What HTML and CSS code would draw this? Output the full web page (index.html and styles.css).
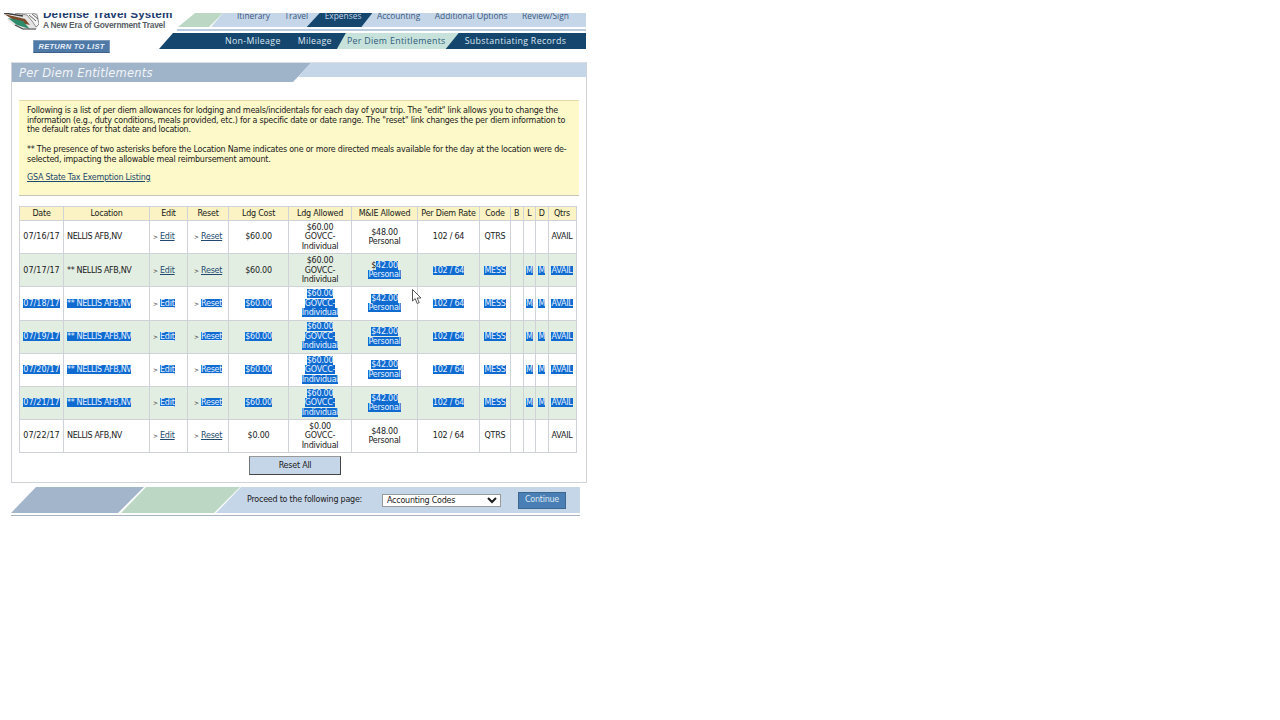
FILE: index.html
```html
<!DOCTYPE html>
<html lang="en">
<head>
<meta charset="utf-8">
<title>Per Diem Entitlements</title>
<link rel="stylesheet" href="styles.css">
</head>
<body>
<div class="page">
  <header class="header">
    <div class="brand">
      <div class="logo-row">
        <svg class="logo" width="36" height="18" viewBox="0 0 36 18">
          <path d="M4 6 L20 0 L35 0 L36 12 L33 17 L20 17 L10 12 Z" fill="#e4e4e4"/>
          <path d="M1 1 L14 4 L22 6 L27 12 L14 9 Z" fill="#7a4a2a"/>
          <path d="M5 5 L20 8 L25 14 L27 16 L14 12 Z" fill="#2d8a6a"/>
          <path d="M1 0 L20 3" stroke="#3a3a3a" stroke-width="1.4" fill="none"/>
          <path d="M12 0 L24 2 L29 8 L33 14 L36 11 L34 2 L30 0 Z" fill="#f4f4f4" stroke="#777" stroke-width="0.8"/>
          <path d="M12 12 L20 16 L33 16" fill="none" stroke="#444" stroke-width="1.1"/>
          <path d="M26 2 L33 8 M29 1 L35 6" stroke="#666" stroke-width="1" fill="none"/>
        </svg>
        <div class="brand-text">
          <div class="brand-name">Defense Travel System</div>
          <div class="brand-sub">A New Era of Government Travel</div>
        </div>
      </div>
      <a class="return-btn">RETURN TO LIST</a>
    </div>
    <nav class="nav">
      <div class="nav-top">
        <div class="nav-green"></div>
        <ul class="tabs-top">
          <li>Itinerary</li>
          <li>Travel</li>
          <li class="on">Expenses</li>
          <li>Accounting</li>
          <li>Additional Options</li>
          <li>Review/Sign</li>
        </ul>
      </div>
      <div class="nav-line"></div>
      <ul class="tabs-sub">
        <li>Non-Mileage</li>
        <li>Mileage</li>
        <li class="on">Per Diem Entitlements</li>
        <li>Substantiating Records</li>
      </ul>
    </nav>
  </header>

  <main class="panel">
    <div class="panel-head">
      <h1 class="panel-title">Per Diem Entitlements</h1>
      <div class="panel-band"></div>
    </div>
    <div class="notice">
      <p>Following is a list of per diem allowances for lodging and meals/incidentals for each day of your trip. The "edit" link allows you to change the information (e.g., duty conditions, meals provided, etc.) for a specific date or date range. The "reset" link changes the per diem information to the default rates for that date and location.</p>
      <p>** The presence of two asterisks before the Location Name indicates one or more directed meals available for the day at the location were de-selected, impacting the allowable meal reimbursement amount.</p>
      <p class="gsa"><a>GSA State Tax Exemption Listing</a></p>
    </div>
    <table class="grid">
      <colgroup>
        <col class="c-date"><col class="c-loc"><col class="c-edit"><col class="c-reset"><col class="c-cost"><col class="c-allow"><col class="c-mie"><col class="c-rate"><col class="c-code"><col class="c-m"><col class="c-m"><col class="c-m"><col class="c-q">
      </colgroup>
      <thead>
        <tr><th>Date</th><th>Location</th><th>Edit</th><th>Reset</th><th>Ldg Cost</th><th>Ldg Allowed</th><th>M&amp;IE Allowed</th><th>Per Diem Rate</th><th>Code</th><th>B</th><th>L</th><th>D</th><th>Qtrs</th></tr>
      </thead>
      <tbody>
        <tr>
          <td class="date">07/16/17</td><td class="left loc">NELLIS AFB,NV</td><td class="left"><span class="arr">&gt;</span><a>Edit</a></td><td class="left rs"><span class="arr">&gt;</span><a>Reset</a></td><td>$60.00</td><td>$60.00<br>GOVCC-<br>Individual</td><td>$48.00<br>Personal</td><td>102 / 64</td><td>QTRS</td><td></td><td></td><td></td><td>AVAIL</td>
        </tr>
        <tr class="alt">
          <td class="date">07/17/17</td><td class="left loc">** NELLIS AFB,NV</td><td class="left"><span class="arr">&gt;</span><a>Edit</a></td><td class="left rs"><span class="arr">&gt;</span><a>Reset</a></td><td>$60.00</td><td>$60.00<br>GOVCC-<br>Individual</td><td>$<span class="sel">42.00<br>Personal</span></td><td><span class="sel">102 / 64</span></td><td><span class="sel">MESS</span></td><td></td><td><span class="sel">M</span></td><td><span class="sel">M</span></td><td><span class="sel">AVAIL</span></td>
        </tr>
        <tr>
          <td class="date"><span class="sel">07/18/17</span></td><td class="left loc"><span class="sel">** NELLIS AFB,NV</span></td><td class="left"><span class="arr">&gt;</span><a class="sel">Edit</a></td><td class="left rs"><span class="arr">&gt;</span><a class="sel">Reset</a></td><td><span class="sel">$60.00</span></td><td><span class="sel">$60.00<br>GOVCC-<br>Individual</span></td><td><span class="sel">$42.00<br>Personal</span></td><td><span class="sel">102 / 64</span></td><td><span class="sel">MESS</span></td><td></td><td><span class="sel">M</span></td><td><span class="sel">M</span></td><td><span class="sel">AVAIL</span></td>
        </tr>
        <tr class="alt">
          <td class="date"><span class="sel">07/19/17</span></td><td class="left loc"><span class="sel">** NELLIS AFB,NV</span></td><td class="left"><span class="arr">&gt;</span><a class="sel">Edit</a></td><td class="left rs"><span class="arr">&gt;</span><a class="sel">Reset</a></td><td><span class="sel">$60.00</span></td><td><span class="sel">$60.00<br>GOVCC-<br>Individual</span></td><td><span class="sel">$42.00<br>Personal</span></td><td><span class="sel">102 / 64</span></td><td><span class="sel">MESS</span></td><td></td><td><span class="sel">M</span></td><td><span class="sel">M</span></td><td><span class="sel">AVAIL</span></td>
        </tr>
        <tr>
          <td class="date"><span class="sel">07/20/17</span></td><td class="left loc"><span class="sel">** NELLIS AFB,NV</span></td><td class="left"><span class="arr">&gt;</span><a class="sel">Edit</a></td><td class="left rs"><span class="arr">&gt;</span><a class="sel">Reset</a></td><td><span class="sel">$60.00</span></td><td><span class="sel">$60.00<br>GOVCC-<br>Individual</span></td><td><span class="sel">$42.00<br>Personal</span></td><td><span class="sel">102 / 64</span></td><td><span class="sel">MESS</span></td><td></td><td><span class="sel">M</span></td><td><span class="sel">M</span></td><td><span class="sel">AVAIL</span></td>
        </tr>
        <tr class="alt">
          <td class="date"><span class="sel">07/21/17</span></td><td class="left loc"><span class="sel">** NELLIS AFB,NV</span></td><td class="left"><span class="arr">&gt;</span><a class="sel">Edit</a></td><td class="left rs"><span class="arr">&gt;</span><a class="sel">Reset</a></td><td><span class="sel">$60.00</span></td><td><span class="sel">$60.00<br>GOVCC-<br>Individual</span></td><td><span class="sel">$42.00<br>Personal</span></td><td><span class="sel">102 / 64</span></td><td><span class="sel">MESS</span></td><td></td><td><span class="sel">M</span></td><td><span class="sel">M</span></td><td><span class="sel">AVAIL</span></td>
        </tr>
        <tr>
          <td class="date">07/22/17</td><td class="left loc">NELLIS AFB,NV</td><td class="left"><span class="arr">&gt;</span><a>Edit</a></td><td class="left rs"><span class="arr">&gt;</span><a>Reset</a></td><td>$0.00</td><td>$0.00<br>GOVCC-<br>Individual</td><td>$48.00<br>Personal</td><td>102 / 64</td><td>QTRS</td><td></td><td></td><td></td><td>AVAIL</td>
        </tr>
      </tbody>
    </table>
    <div class="reset-row"><button class="reset-all">Reset All</button></div>
  </main>

  <footer class="footer">
    <div class="foot-a"></div>
    <div class="foot-b"></div>
    <div class="foot-c">
      <span class="proceed">Proceed to the following page:</span>
      <select class="page-select"><option>Accounting Codes</option></select>
      <button class="continue">Continue</button>
    </div>
  </footer>
  <div class="foot-line"></div>

  <svg class="cursor" width="11" height="16" viewBox="0 0 11 16">
    <path d="M0.5 0.5 L0.5 12 L3.2 9.6 L5.2 14.5 L7.2 13.6 L5.2 9 L9 9 Z" fill="#fff" stroke="#444" stroke-width="0.9"/>
  </svg>
</div>
</body>
</html>
```
FILE: styles.css
```css
* { box-sizing: border-box; }
html, body { margin: 0; background: #fff; }
body { font-family: "DejaVu Sans", Verdana, sans-serif; font-size: 8px; letter-spacing: -0.23px; line-height: 9.5px; color: #1a1a1a; }
ul { list-style: none; margin: 0; padding: 0; }
.page { position: relative; width: 1280px; height: 720px; padding-top: 13px; overflow: hidden; }

.header { display: flex; width: 586px; height: 40px; }
.brand { width: 159px; flex: none; }
.logo-row { display: flex; padding-left: 3px; width: 200px; height: 18px; overflow: hidden; }
.logo { flex: none; }
.brand-text { margin-left: 4px; margin-top: -5px; }
.brand-name { font: bold 11.7px/12px "Liberation Sans", Arial, sans-serif; color: #1d3c6e; white-space: nowrap; letter-spacing: 0.1px; }
.brand-sub { font: bold 8.4px/9px "Liberation Sans", Arial, sans-serif; color: #5a5f66; white-space: nowrap; letter-spacing: -0.25px; margin-top: 1px; }
.return-btn { display: block; margin: 9px 0 0 33px; width: 77px; height: 13px; background: #4f7aa8; border: 1px solid #7f9cbb; border-bottom-color: #3b5f88; color: #e8f0f8; font: italic bold 7.5px/12px "Liberation Sans", Arial, sans-serif; text-align: center; letter-spacing: 0.3px; }

.nav { flex: 1; min-width: 0; }
.nav-top { display: flex; height: 14px; margin-left: 19px; }
.nav-green { width: 45px; flex: none; background: #bcd8c4; clip-path: polygon(17px 0, 45px 0, 31px 100%, 0 100%); }
.tabs-top { flex: 1; margin-left: -12px; background: #c6d6e9; clip-path: polygon(12px 0, 100% 0, 100% 100%, 0 100%); display: flex; gap: 14.5px; padding-left: 26px; font: 8.4px/6px "Open Sans", sans-serif; letter-spacing: 0; color: #3b5a80; }
.tabs-top li { white-space: nowrap; height: 14px; }
.tabs-top li.on { color: #c6d6e9; padding: 0 11px 0 18px; margin: 0 -10px 0 -16px; background: #15476e; clip-path: polygon(13px 0, 100% 0, calc(100% - 11px) 100%, 0 100%); }
.nav-line { height: 2px; margin: 2px 0 2px 18px; background: #b9cbe0; }
.tabs-sub { height: 16px; background: #15476e; clip-path: polygon(14px 0, 100% 0, 100% 100%, 0 100%); display: flex; gap: 17px; padding-left: 66px; font: 8.8px/16px "Open Sans", sans-serif; color: #dbe6f0; letter-spacing: 0.33px; }
.tabs-sub li { white-space: nowrap; }
.tabs-sub li.on { color: #2f5a7c; padding: 0 13px 0 10px; margin: 0 -11px 0 -12px; background: #c6e2da; clip-path: polygon(9px 0, 100% 0, calc(100% - 13px) 100%, 0 100%); }

.panel { margin: 9px 0 0 11px; width: 576px; height: 421px; border: 1px solid #cfd2d6; border-top-color: #dcdfe3; }
.panel-head { display: flex; height: 19px; }
.panel-title { margin: 0; width: 299px; flex: none; height: 19px; background: #9fb3c9; clip-path: polygon(0 0, 100% 0, 281px 100%, 0 100%); color: #f2f5f8; font: italic normal 11.5px/20px "DejaVu Sans", sans-serif; padding-left: 7px; letter-spacing: 0.2px; }
.panel-band { flex: 1; height: 14px; margin-left: -13px; background: #c6d6e9; clip-path: polygon(13px 0, 100% 0, 100% 100%, 0 100%); }

.notice { margin: 18px 7px 0 7px; height: 96px; background: #fdf9c9; border-top: 1px solid #e2d9a8; border-bottom: 1px solid #c4c7b8; padding: 5px 8px 0; }
.notice p { margin: 0 0 10.5px; }
.notice p.gsa { margin-top: -2px; }
.notice a, .grid a { color: #234a6e; text-decoration: underline; }

.grid { margin: 10px 0 0 7px; width: 557px; table-layout: fixed; border-collapse: collapse; text-align: center; }
.c-date { width: 44px; } .c-loc { width: 86px; } .c-edit { width: 38px; } .c-reset { width: 41px; } .c-cost { width: 60px; }
.c-allow { width: 63px; } .c-mie { width: 66px; } .c-rate { width: 62px; } .c-code { width: 31px; } .c-m { width: 12.5px; } .c-q { width: 28px; }
.grid th, .grid td { border: 1px solid #cfd2d6; padding: 0; white-space: nowrap; overflow: hidden; }
.grid th { height: 14px; background: #fbf3c4; font-weight: normal; color: #1a1a1a; line-height: 12px; }
.grid td { height: 33.2px; }
.grid tr.alt td { background: #e3eee3; }
.grid td.left { text-align: left; padding-left: 3px; }
.grid td.rs { padding-left: 6px; }
.grid td.loc { letter-spacing: -0.35px; }
.grid td.date { letter-spacing: 0.05px; }
.arr { font-size: 6px; display: inline-block; width: 7px; }
.sel { background: #0f6bd0; color: #e8f2ff !important; }

.reset-row { display: flex; justify-content: center; margin-top: 3px; padding-right: 8px; }
.reset-all { width: 92px; height: 19px; background: #c6d6e9; border: 1px solid #777; border-right-color: #444; border-bottom-color: #444; border-top-color: #999; font: 8px/1 "DejaVu Sans", sans-serif; letter-spacing: -0.23px; color: #1a1a1a; padding: 0; }

.footer { display: flex; margin: 4px 0 0 11px; width: 569px; height: 26px; }
.foot-a { width: 133px; flex: none; background: #a3b5ca; clip-path: polygon(25px 0, 100% 0, 107px 100%, 0 100%); }
.foot-b { width: 119px; flex: none; margin-left: -23px; background: #bcd8c4; clip-path: polygon(25px 0, 100% 0, 93px 100%, 0 100%); }
.foot-c { flex: 1; margin-left: -24px; background: #c6d6e9; clip-path: polygon(25px 0, 100% 0, 100% 100%, 0 100%); display: flex; align-items: center; padding-left: 31px; }
.proceed { white-space: nowrap; width: 135px; flex: none; }
.page-select { width: 119px; height: 13px; font: 8px "DejaVu Sans", sans-serif; letter-spacing: -0.23px; padding: 0; border: 1px solid #999; background: #fff; color: #1a1a1a; }
.continue { margin-left: 17px; width: 48px; height: 17px; background: #4a7fb5; border: 1px solid #3a6690; color: #dce8f4; font: 8px/1 "DejaVu Sans", sans-serif; letter-spacing: -0.23px; padding: 0; }
.foot-line { margin: 2px 0 0 11px; width: 569px; height: 1px; background: #a9b3bf; }

.cursor { position: absolute; left: 412px; top: 289px; }
```
